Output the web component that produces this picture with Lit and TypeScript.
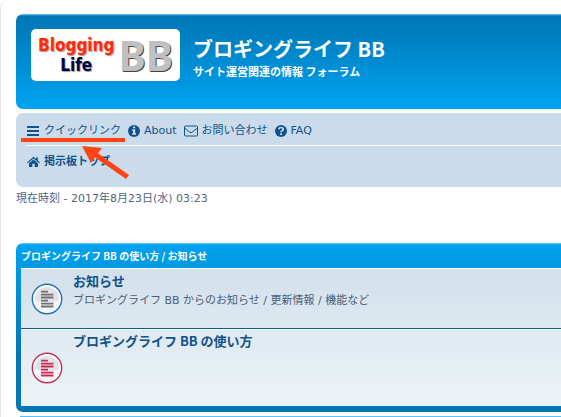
import { LitElement, html, css, svg } from "lit";
import { customElement, property } from "lit/decorators.js";

@customElement("forum-icon")
class ForumIcon extends LitElement {
  @property() tone = "read";

  static styles = css`
    :host { display: block; width: 32px; height: 32px; color: #707070; --ring: #1d6fb8; }
    :host([tone="unread"]) { color: #c92b54; --ring: #c92b54; }
    svg { display: block; }
    .ring { fill: #fff; stroke: var(--ring); stroke-width: 1.4; }
    .disc { fill: #e1e2e6; }
    .lines { stroke: currentColor; stroke-width: 1.8; fill: none; }
  `;

  render() {
    return html`<svg width="32" height="32" viewBox="0 0 32 32" aria-hidden="true">
      <circle class="ring" cx="16" cy="16" r="14.7"></circle>
      <circle class="disc" cx="16" cy="16" r="12"></circle>
      <path fill="#f4f5f8" d="M4 17Q16 22 28 17A12 12 0 0 1 4 17Z"></path>
      <path class="lines" d="M10 8.7h7M10 11.7h12.500M10 14.5h12.500M10 17.700h7M10 20.700h12.500M10 23.500h12.500"></path>
    </svg>`;
  }
}

const glyphs = {
  bars: svg`<svg width="13" height="12" viewBox="0 0 13 12" aria-hidden="true"><path fill="currentColor" d="M0 1h12v2H0zM0 5h12v2H0zM0 9h12v2H0z"/></svg>`,
  info: svg`<svg width="12" height="12" viewBox="0 0 12 12" aria-hidden="true"><circle cx="6" cy="6" r="6" fill="currentColor"/><path fill="#cadceb" d="M5 1.500h2.200v1.700H5zM4.200 4.300h3v4h.8v1.500H4.200V8.300H5V5.800h-.8z"/></svg>`,
  mail: svg`<svg width="14" height="12" viewBox="0 0 14 12" aria-hidden="true"><rect x=".5" y="1" width="13" height="10" rx="1" fill="none" stroke="currentColor"/><path fill="none" stroke="currentColor" d="M.8 3.200L6 7.300q1 .7 2 0l5.200-4.100"/></svg>`,
  help: svg`<svg width="12" height="12" viewBox="0 0 12 12" aria-hidden="true"><circle cx="6" cy="6" r="6" fill="currentColor"/><path fill="none" stroke="#cadceb" stroke-width="1.700" d="M3.700 4.200Q4.300 2.500 6 2.500q2.300 0 2.300 1.700 0 1-1.200 1.600Q6 6.300 6 7.300"/><path fill="#cadceb" d="M5.100 8.200h1.800v1.700H5.100z"/></svg>`,
  home: svg`<svg width="13" height="12" viewBox="0 0 13 12" aria-hidden="true"><path fill="currentColor" d="M6.500 .8L9 3V1.500h1.800v3.100L13 6.500l-.7.800L6.500 2.500.7 7.300 0 6.500zM6.500 3.500L11 7.200V11H7.700V7.800H5.300V11H2V7.200z"/></svg>`,
};

@customElement("app-root")
class AppRoot extends LitElement {
  static styles = css`
    :host {
      display: block;
      font: 11px/16px "DejaVu Sans", "Noto Sans CJK JP", sans-serif;
      color: #536482;
      background: #fff;
    }
    * { box-sizing: border-box; }
    a { color: #105289; text-decoration: none; }
    h1, h2, h3, p, ul { margin: 0; padding: 0; }
    ul { list-style: none; }
    .wrap {
      border-left: 1px solid #e1e6eb;
      border-radius: 8px 0 0 0;
      padding: 14px 0 0 15px;
      overflow: hidden;
    }
    .headerbar {
      display: flex;
      align-items: flex-start;
      gap: 13px;
      padding: 15px 15px 28px;
      margin-bottom: 4px;
      border-radius: 7px 0 0 7px;
      color: #fff;
      background: linear-gradient(#6aceff 0, #0076b5 2px, #00a2ee 92px);
    }
    .logo {
      display: flex;
      align-items: center;
      justify-content: center;
      gap: 4px;
      width: 149px;
      height: 52px;
      border-radius: 5px;
      background: #fff;
    }
    .words {
      font: bold 17px/20px "DejaVu Sans Condensed", "DejaVu Sans", sans-serif;
      font-stretch: condensed;
      text-align: center;
      color: #ff2a0c;
      text-shadow: 1px 1px 1px #999;
    }
    .words span { display: block; }
    .words .life { color: #000044; }
    .big {
      font: bold 41px/50px "Noto Sans", sans-serif;
      color: #c0c0c0;
      text-shadow: 1px 1px 0 #444;
    }
    .site { padding-top: 7px; font-family: "Noto Sans CJK JP", sans-serif; font-weight: bold; }
    .site h1 { font-size: 20px; line-height: 26px; }
    .site p { font-size: 11px; line-height: 18px; }
    .navbar {
      position: relative;
      padding: 10px 0 17px 10px;
      border-radius: 7px 0 0 7px;
      background: #cadceb;
    }
    .links { display: flex; gap: 7px; padding-bottom: 6px; border-bottom: 1px solid #fff; }
    .links a, .crumb a { display: flex; align-items: center; gap: 4px; }
    .crumb { padding-top: 8px; font-weight: bold; }
    .links, .crumb { padding-left: 1px; }
    .mark { position: absolute; left: 4px; top: 22px; }
    .time { line-height: 24px; margin-bottom: 32px; }
    .forum {
      padding: 6px 0 6px 5px;
      margin-bottom: 4px;
      border-radius: 7px 0 0 7px;
      background: linear-gradient(#6aceff 0, #00a2ee 2px, #0076b5 110px);
    }
    .forum h2 {
      font: bold 10px/14px "Noto Sans CJK JP", sans-serif;
      color: #fff;
      padding-bottom: 5px;
    }
    .rows { background: linear-gradient(#d2e0eb, #edf4f7); }
    .row { display: flex; gap: 10px; padding: 2px 0 0 10px; border-top: 1px solid #fff; min-height: 60px; }
    .row forum-icon { align-self: center; margin-bottom: 2px; }
    .row + .row { min-height: 77px; border-top: 0; box-shadow: 0 -1px #00608f, inset 0 1px #fff; margin-top: 1px; }
    .row h3 { font: bold 13px/20px "Noto Sans CJK JP", sans-serif; }
    .row p { line-height: 20px; color: #4c5d77; }
    .next { height: 1px; margin-left: 4px; background: #55c3fb; }
  `;

  render() {
    return html`<div class="wrap">
      <header class="headerbar">
        <a class="logo" href="#" aria-label="Blogging Life BB">
          <span class="words"><span>Blogging</span><span class="life">Life</span></span>
          <span class="big">BB</span>
        </a>
        <div class="site">
          <h1>ブロギングライフ BB</h1>
          <p>サイト運営関連の情報 フォーラム</p>
        </div>
      </header>
      <nav class="navbar">
        <ul class="links">
          <li><a href="#">${glyphs.bars}クイックリンク</a></li>
          <li><a href="#">${glyphs.info}About</a></li>
          <li><a href="#">${glyphs.mail}お問い合わせ</a></li>
          <li><a href="#">${glyphs.help}FAQ</a></li>
        </ul>
        <div class="crumb"><a href="#">${glyphs.home}掲示板トップ</a></div>
        <svg class="mark" width="112" height="46" viewBox="0 0 112 46" aria-hidden="true">
          <path fill="#ff4314" d="M1 3h104v4H1zM62 11L82 13 78 18.300 109 40 106 44 75 22.500 71 28z"/>
        </svg>
      </nav>
      <p class="time">現在時刻 - 2017年8月23日(水) 03:23</p>
      <section class="forum">
        <h2>ブロギングライフ BB の使い方 / お知らせ</h2>
        <ul class="rows">
          <li class="row">
            <forum-icon tone="read"></forum-icon>
            <div>
              <h3><a href="#">お知らせ</a></h3>
              <p>ブロギングライフ BB からのお知らせ / 更新情報 / 機能など</p>
            </div>
          </li>
          <li class="row">
            <forum-icon tone="unread"></forum-icon>
            <div><h3><a href="#">ブロギングライフ BB の使い方</a></h3></div>
          </li>
        </ul>
      </section>
      <div class="next"></div>
    </div>`;
  }
}
